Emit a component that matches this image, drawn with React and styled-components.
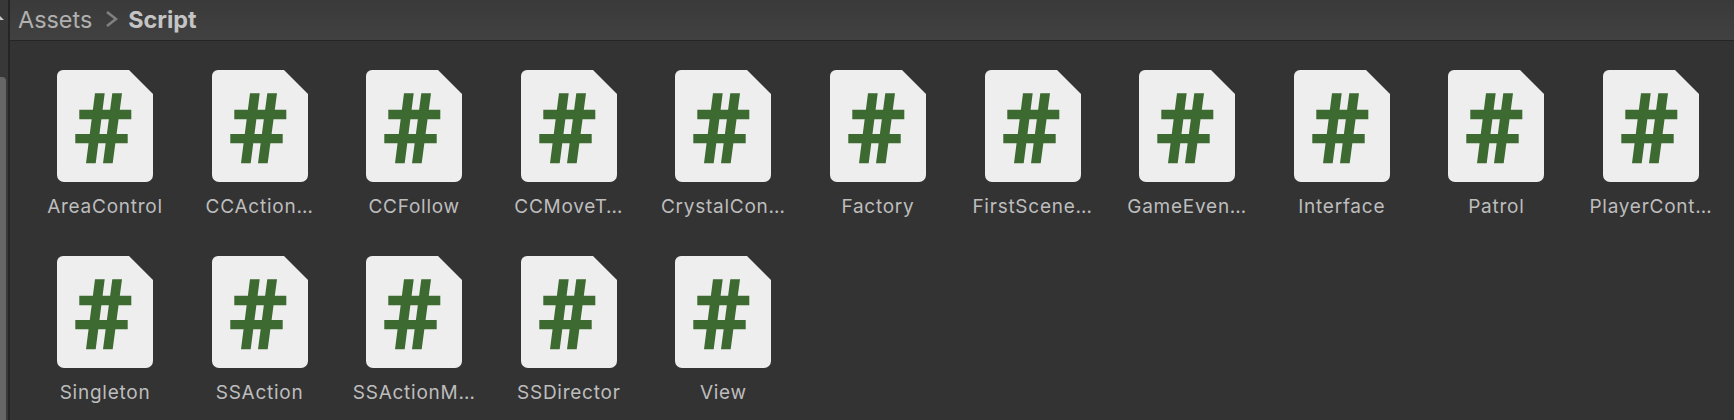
import React from "react"
import styled, { createGlobalStyle } from "styled-components"

const FILES = [
  "AreaControl", "CCAction…", "CCFollow", "CCMoveT…", "CrystalCon…", "Factory",
  "FirstScene…", "GameEven…", "Interface", "Patrol", "PlayerCont…",
  "Singleton", "SSAction", "SSActionM…", "SSDirector", "View",
]

const ScriptIcon = () => (
  <IconSvg viewBox="0 0 96 112">
    <path
      d="M6 0H72L96 24V105a7 7 0 0 1-7 7H7a7 7 0 0 1-7-7V6a6 6 0 0 1 6-6Z"
      fill="#eeeeee"
    />
    <path
      d="M38 23.3H47.7L38.7 93.3H29ZM55.3 23.3H65L55.7 93.3H46ZM22.3 39.7H74.3V49.3H22.3ZM18.3 64H70.7V73.3H18.3Z"
      fill="#3c6a31"
    />
  </IconSvg>
)

const App = () => {
  return (
    <>
      <GlobalStyle />
      <Page>
        <Rail>
          <RailArrow />
          <RailThumb />
        </Rail>
        <Main>
          <Header>
            <Crumb>Assets</Crumb>
            <Chevron viewBox="0 0 12 16">
              <path d="M1 1L10 8L1 15" fill="none" stroke="#808080" strokeWidth="2.6" />
            </Chevron>
            <Crumb $current>Script</Crumb>
          </Header>
          <Grid>
            {FILES.map(name => (
              <Item key={name}>
                <ScriptIcon />
                <Label>{name}</Label>
              </Item>
            ))}
          </Grid>
        </Main>
      </Page>
    </>
  )
}

export default App

const GlobalStyle = createGlobalStyle`
  html, body {
    margin: 0;
    padding: 0;
    background: #333333;
    overflow: hidden;
  }
`

const Page = styled.div`
  display: flex;
  width: 1734px;
  height: 420px;
  overflow: hidden;
  font-family: Inter, "Liberation Sans", sans-serif;
`

const Rail = styled.div`
  width: 8px;
  flex: none;
  background: #383838;
  border-right: 2px solid #252525;
  display: flex;
  flex-direction: column;
`

const RailArrow = styled.div`
  width: 0;
  height: 0;
  margin: 16px 0 0 -4px;
  border-left: 4px solid transparent;
  border-right: 4px solid transparent;
  border-bottom: 4px solid #c8c8c8;
`

const RailThumb = styled.div`
  width: 6px;
  flex: 1;
  margin-top: 57px;
  background: #666666;
  border-top-right-radius: 4px;
`

const Main = styled.div`
  flex: 1;
  min-width: 0;
  display: flex;
  flex-direction: column;
`

const Header = styled.div`
  height: 41px;
  flex: none;
  display: flex;
  align-items: center;
  padding: 0 0 2px 8px;
  box-sizing: border-box;
  background: linear-gradient(#3a3a3a, #414141);
  border-bottom: 1px solid #252525;
`

const Crumb = styled.span`
  font-size: 23.4px;
  font-weight: ${p => (p.$current ? 700 : 400)};
  color: ${p => (p.$current ? "#c4c4c4" : "#b0b0b0")};
`

const Chevron = styled.svg`
  width: 12px;
  height: 16px;
  margin: 0 10px 0 14px;
`

const Grid = styled.div`
  display: grid;
  grid-template-columns: repeat(11, 154.6px);
  grid-auto-rows: 186px;
  padding: 29px 0 0 30px;
`

const Item = styled.div`
  display: flex;
  flex-direction: column;
  align-items: center;
  width: 130px;
`

const IconSvg = styled.svg`
  display: block;
  width: 96px;
  height: 112px;
`

const Label = styled.div`
  margin-top: 12px;
  font-size: 19px;
  line-height: 26px;
  letter-spacing: 0.75px;
  color: #bdbdbd;
  white-space: nowrap;
`
